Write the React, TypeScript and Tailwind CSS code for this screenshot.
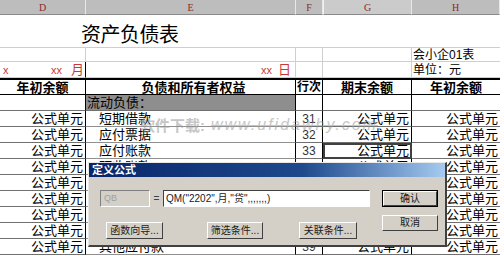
import React from "react";

const cjk = "font-['Liberation_Sans','Noto_Sans_CJK_SC',sans-serif]";

function Btn({ children, className = "", def = false }: { children: React.ReactNode; className?: string; def?: boolean }) {
  return (
    <div className={`${def ? "border border-black" : ""} ${className}`}>
      <div className="h-full w-full border-t border-l border-t-white border-l-white border-r border-b border-r-[#404040] border-b-[#404040] bg-[#d4d0c8] flex items-center justify-center text-[10px] leading-none text-[#202020] whitespace-nowrap">
        {children}
      </div>
    </div>
  );
}

const headerCell = "bg-[#bdbdbd] border-r border-r-[#e8e8e8] border-b border-b-[#8a8a8a] flex items-center justify-center text-[10px] text-[#8a2a2a] font-['Liberation_Serif',serif]";
const light = "border-r border-b border-[#cfcfcf]";

export default function App() {
  const labels = ["短期借款", "应付票据", "应付账款", "预收账款", "应付职工薪酬", "应交税费", "应付利息", "应付利润", "其他应付款"];
  return (
    <div className={`relative w-[500px] h-[255px] overflow-hidden bg-white text-black ${cjk}`}>
      <div className="grid grid-cols-[86px_210px_27px_89px_88px] grid-rows-[15px_33px_14px_16px_17px_16px_repeat(9,16px)]">
        {/* column headers */}
        <div className={headerCell}>D</div>
        <div className={headerCell}>E</div>
        <div className={headerCell}>F</div>
        <div className={`${headerCell} bg-[#cbcbcb] border-l border-l-[#f0f0f0]`}>G</div>
        <div className={headerCell}>H</div>

        {/* title row */}
        <div className="col-span-5 border-b border-[#cfcfcf] pl-[81px] pt-[10px]">
          <span className="text-[20px] leading-[20px] tracking-[-0.5px]">资产负债表</span>
        </div>

        {/* row 3 */}
        <div className={light}></div>
        <div className={light}></div>
        <div className={light}></div>
        <div className={light}></div>
        <div className="border-b border-[#cfcfcf] pl-[1px] text-[12px] leading-[14px]">会小企01表</div>

        {/* row 4 */}
        <div className={`${light} border-r-black flex items-end justify-between text-[#c83a3a] text-[11px] leading-none pl-[3px] pr-[1px] pb-[1px]`}>
          <span>x</span>
          <span className="flex items-end gap-[9px]"><span>xx</span><span className="text-[13px]">月</span></span>
        </div>
        <div className={`${light} flex items-end justify-end gap-[6px] pr-[4px] pb-[1px] text-[#c83a3a] text-[11px] leading-none`}>
          <span>xx</span><span className="text-[13px]">日</span>
        </div>
        <div className={light}></div>
        <div className={light}></div>
        <div className="border-b border-[#cfcfcf] pl-[1px] text-[12px] leading-[16px]">单位：元</div>

        {/* header row */}
        {["年初余额", "负债和所有者权益", "行次", "期末余额", "年初余额"].map((t, i) => (
          <div
            key={i}
            className={`border-t-2 border-t-black border-b border-b-black ${i < 4 ? "border-r border-r-black" : ""} flex items-center justify-center whitespace-nowrap overflow-hidden ${i === 2 ? "text-[12px]" : "text-[13px]"} ${i === 1 ? "pl-[6px]" : ""} font-bold leading-none`}
          >
            {t}
          </div>
        ))}

        {/* 流动负债 row */}
        <div className="border-r border-r-black border-b border-b-[#707070]"></div>
        <div className="border-r border-r-black border-b border-b-[#707070] bg-[#8e8e8e] flex items-center text-[13px] leading-none pl-[1px]">流动负债：</div>
        <div className="border-r border-r-black border-b border-b-[#707070]"></div>
        <div className="border-r border-r-black border-b border-b-[#707070]"></div>
        <div className="border-b border-b-[#707070]"></div>

        {labels.map((l, i) => (
          <React.Fragment key={l}>
            <div className="border-r border-r-black border-b border-b-[#707070] flex items-center justify-end pr-[2px] text-[13px] leading-none">公式单元</div>
            <div className="border-r border-r-black border-b border-b-[#909090] flex items-center pl-[13px] text-[13px] leading-none">{l}</div>
            <div className="border-r border-r-black border-b border-b-[#707070] flex items-center justify-center text-[12px] leading-none text-[#333]">{31 + i}</div>
            <div className={`border-r border-r-black border-b border-b-[#707070] flex items-center justify-end pr-[2px] text-[13px] leading-none ${i === 2 ? "outline-2 outline-[#404040] -outline-offset-2" : ""}`}>公式单元</div>
            <div className="border-b border-b-[#707070] flex items-center justify-end pr-[2px] text-[13px] leading-none">公式单元</div>
          </React.Fragment>
        ))}
      </div>

      {/* watermark */}
      <div className="absolute left-[140px] top-[117px] flex items-center gap-[6px] text-[#999] opacity-55 pointer-events-none">
        <span className="text-[15px] font-bold leading-none">软件下载:</span>
        <span className="text-[16px] italic leading-none tracking-[2px] line-through">www.ufidawhy.com</span>
      </div>

      {/* dialog */}
      <div className="absolute left-[88px] top-[162px] w-[359px] h-[85px] bg-[#d4d0c8] border-t border-l border-t-[#e8e8e8] border-l-[#e8e8e8] border-r-2 border-b-2 border-r-[#404040] border-b-[#404040] flex flex-col">
        <div className="h-[14px] bg-gradient-to-r from-[#0a246a] via-[#1e4a8c] via-60% to-[#a6caf0] flex items-center pl-[3px] text-[11px] font-bold text-white leading-none">定义公式</div>
        <div className="flex pl-[11px] pt-[13px] gap-[11px]">
          <div className="flex flex-col w-[271px]">
            <div className="flex items-center h-[17px]">
              <div className="w-[50px] h-[17px] border-t border-l border-[#808080] border-r border-b border-r-white border-b-white bg-[#d4d0c8] flex items-center pl-[3px] text-[9px] text-[#a0a0a0] leading-none">QB</div>
              <span className="w-[13px] text-center text-[10px] text-[#404040] leading-none">=</span>
              <div className="w-[207px] h-[17px] border-t border-l border-[#404040] border-r border-b border-r-white border-b-white bg-white flex items-center pl-[2px] text-[10px] leading-none text-[#202020] whitespace-nowrap">QM("2202",月,"贷",,,,,,,)</div>
            </div>
            <div className="flex mt-[15px] pl-[6px]">
              <Btn className="w-[57px] h-[17px]">函数向导...</Btn>
              <Btn className="w-[56px] h-[17px] ml-[44px]">筛选条件...</Btn>
              <Btn className="w-[58px] h-[17px] ml-[36px]">关联条件...</Btn>
            </div>
          </div>
          <div className="flex flex-col gap-[8px]">
            <Btn def className="w-[56px] h-[17px]">确认</Btn>
            <Btn className="w-[56px] h-[16px]">取消</Btn>
          </div>
        </div>
      </div>
    </div>
  );
}
